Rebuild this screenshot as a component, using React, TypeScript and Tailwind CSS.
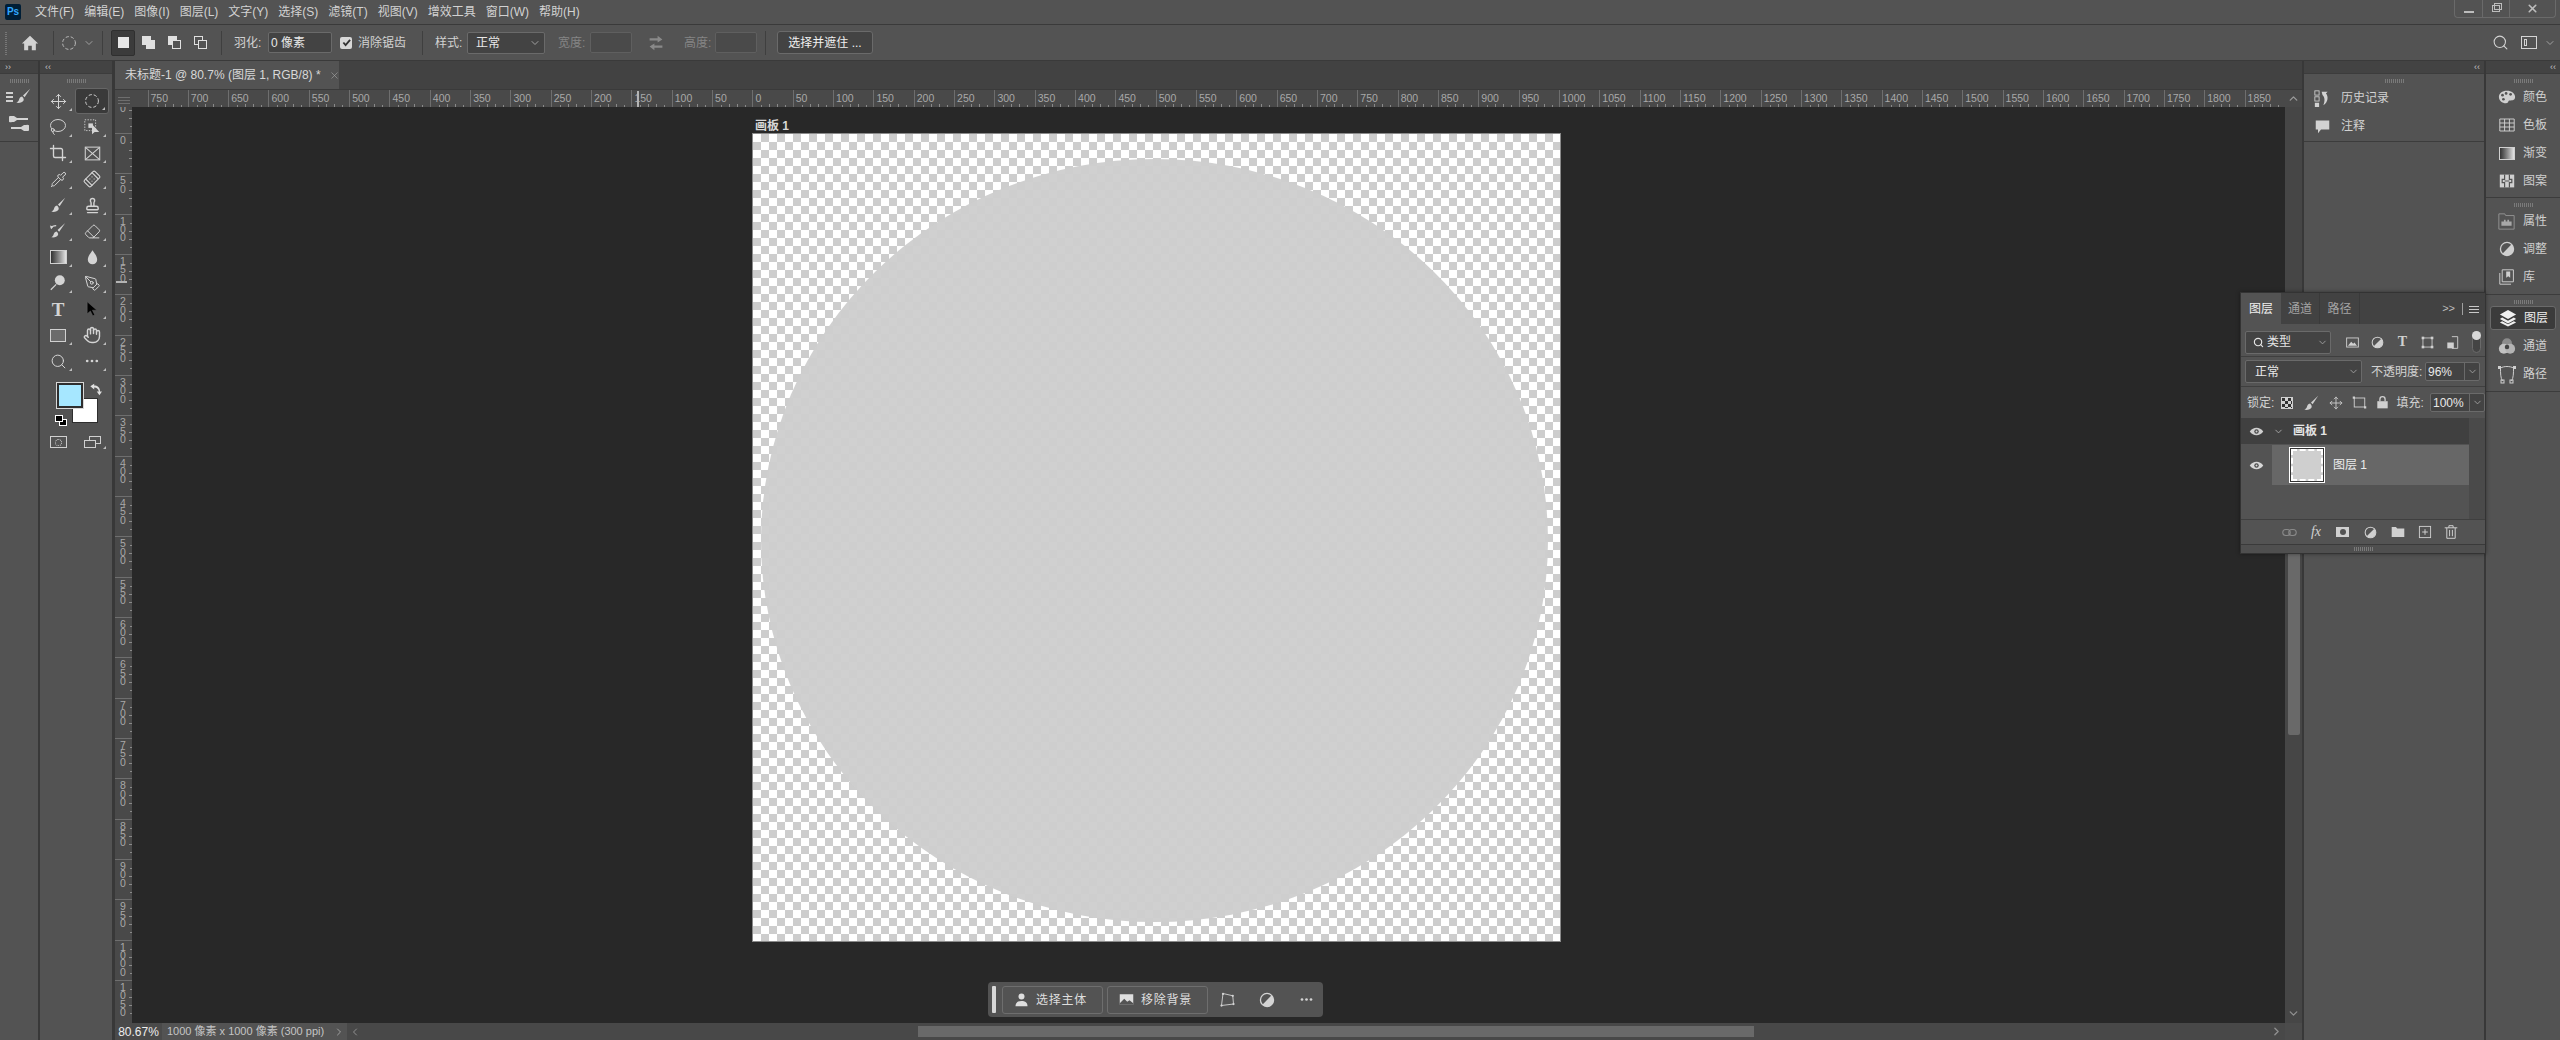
import React from 'react';
import { Bandage, ChevronDown, ChevronLeft, ChevronRight, ChevronUp, Crop, Eraser, Hand, Lasso, Move, PenTool, Pipette, Search, Stamp, X } from 'lucide-react';

const menus = ['文件(F)', '编辑(E)', '图像(I)', '图层(L)', '文字(Y)', '选择(S)', '滤镜(T)', '视图(V)', '增效工具', '窗口(W)', '帮助(H)'];

const Svg = ({ s = 20, h, vb = '0 0 20 20', children }: { s?: number; h?: number; vb?: string; children: React.ReactNode }) => (
  <svg width={s} height={h ?? s} viewBox={vb} fill="currentColor" className="shrink-0">{children}</svg>
);

const Half = ({ s = 16 }: { s?: number }) => (
  <Svg s={s}>
    <circle cx="10" cy="10" r="8.2" fill="none" stroke="currentColor" strokeWidth="1.6" />
    <path d="M15.8 4.2A8.2 8.2 0 0 1 4.2 15.8Z" />
  </Svg>
);

const BrushIcon = () => (
  <Svg s={18}>
    <path d="M18 2 10 9.5l1.8 1.8Z" />
    <path d="M9 10.5c-2.5.3-3 2-3.4 3.5-.3 1.400-1.200 2.500-3 3.500 3.500.5 7-.2 8-2.500.5-1.200.2-2.300-1.600-4.500Z" />
  </Svg>
);

const Marquee = ({ s = 16 }: { s?: number }) => (
  <Svg s={s}><circle cx="10" cy="10" r="8" fill="none" stroke="currentColor" strokeWidth="1.2" strokeDasharray="4 2.500" /></Svg>
);

const Gradient = ({ s = 16 }: { s?: number }) => (
  <span className="block shrink-0 border border-[#d0d0d0] bg-gradient-to-r from-[#333] to-[#e4e4e4]" style={{ width: s, height: s - 3 }} />
);

const SwapArrows = () => (
  <Svg s={16}>
    <path d="M2 6h10V3l6 4.500-6 4V9H2Z" opacity=".9" transform="translate(0 -2)" />
    <path d="M18 14H8v3l-6-4.500 6-4V11h10Z" opacity=".9" transform="translate(0 2)" />
  </Svg>
);

const tools: React.ReactNode[] = [
  <Move size={17} strokeWidth={1.4} />,
  <Marquee />,
  <Lasso size={18} strokeWidth={1.3} />,
  <Svg s={18}>
    <rect x="2" y="2" width="12" height="12" fill="none" stroke="currentColor" strokeDasharray="1.500 1.500" />
    <rect x="6" y="6" width="5" height="5" />
    <path d="M10 7v11l3-2.500h5Z" />
  </Svg>,
  <Crop size={18} strokeWidth={1.8} />,
  <Svg s={17}><rect x="1.500" y="2.500" width="17" height="15" fill="none" stroke="currentColor" strokeWidth="1.200" /><path d="m2 3 16 14M18 3 2 17" stroke="currentColor" strokeWidth="1.200" /></Svg>,
  <Pipette size={17} strokeWidth={1.4} />,
  <Bandage size={18} strokeWidth={1.5} className="-rotate-45" />,
  <BrushIcon />,
  <Stamp size={17} strokeWidth={2} />,
  <Svg s={18}>
    <path d="M18 1 9.500 9l1.800 1.800Z" /><path d="M8.500 10.500c-2.500.5-3 2-3.400 3.500-.3 1.400-1.100 2.300-2.600 3 3.500.5 6.500-.3 7.500-2.500.5-1.200.2-2.300-1.500-4Z" />
    <path d="M2 7c1-2 3-3 6-3" fill="none" stroke="currentColor" strokeWidth="1.200" /><path d="m1 4 1.500 4L5 5Z" />
  </Svg>,
  <Eraser size={17} strokeWidth={1.4} />,
  <Gradient s={17} />,
  <Svg s={17}><path d="M10 1.500c2.500 4 5.500 7 5.500 11a5.500 5.500 0 0 1-11 0c0-4 3-7 5.500-11Z" /></Svg>,
  <Svg s={18}><circle cx="12" cy="7" r="5.500" /><path d="M8 11.500 2 17.500" stroke="currentColor" strokeWidth="1.400" /></Svg>,
  <PenTool size={17} strokeWidth={1.4} />,
  <span className="font-['Liberation_Serif'] text-[19px] font-bold leading-none">T</span>,
  <Svg s={16}><path d="M4 1v15l4-3.500 3 6 2.500-1-3-6H16Z" fill="#000" stroke="#666" strokeWidth=".6" /></Svg>,
  <span className="block h-[13px] w-[16px] border border-[#d0d0d0] bg-[#6c6c6c]" />,
  <Hand size={18} strokeWidth={1.9} />,
  <Search size={17} strokeWidth={1.4} />,
  <Svg s={16}><circle cx="4" cy="10" r="1.700" /><circle cx="10" cy="10" r="1.700" /><circle cx="16" cy="10" r="1.700" /></Svg>,
];

const Grip = () => (
  <div className="mx-auto h-[4px] w-[19px] bg-[repeating-linear-gradient(90deg,#7a7a7a_0_1px,transparent_1px_2px)]" />
);

const Corner = () => <span className="absolute bottom-[3px] right-[3px] h-0 w-0 border-b-[3px] border-l-[3px] border-b-[#bdbdbd] border-l-transparent" />;

const Strip = ({ arrows, right }: { arrows: string; right?: boolean }) => (
  <div className={`flex h-[12px] shrink-0 items-center bg-[#434343] text-[9px] leading-none text-[#c4c4c4] ${right ? 'justify-end pr-[4px]' : 'pl-[5px]'}`}>{arrows}</div>
);

const spansX = Array.from({ length: 53 }, (_, i) => Math.abs(750 - i * 50));

const TickX = () => (
  <svg width="40" height="3" className="absolute bottom-0 left-0" fill="#8a8a8a">
    {[8, 16, 24, 32].map(x => <rect key={x} x={x} y={x === 16 || x === 24 ? 0 : 1} width="1" height="3" />)}
  </svg>
);

const RulerX = () => (
  <div className="flex h-[17px] min-w-0 flex-1 overflow-hidden bg-[#494949] text-[10.5px] leading-[17px] text-[#a8a8a8]">
    <div className="relative h-full w-[15.5px] shrink-0" />
    {spansX.map((n, i) => (
      <div key={i} className="relative h-full w-[40.33px] shrink-0 border-l border-[#6e6e6e] pl-[2px]">
        {n}
        <TickX />
      </div>
    ))}
    <span />
  </div>
);

const RulerY = () => (
  <div className="h-full w-[17px] shrink-0 overflow-hidden bg-[#494949] text-[10.5px] leading-[8.4px] text-[#a8a8a8]">
    <div className="-mt-[14.33px]">
      {[50, 0, 50, 100, 150, 200, 250, 300, 350, 400, 450, 500, 550, 600, 650, 700, 750, 800, 850, 900, 950, 1000, 1050].map((n, i) => (
        <div key={i} className="relative h-[40.33px] border-t border-[#6e6e6e] pl-[5px] pt-[2px]">
          {String(n).split('').map((d, j) => <div key={j}>{d}</div>)}
          <svg width="3" height="40" className="absolute right-0 top-0" fill="#8a8a8a">
            {[8, 16, 24, 32].map(y => <rect key={y} x={y === 16 || y === 24 ? 0 : 1} y={y} width="3" height="1" />)}
          </svg>
        </div>
      ))}
    </div>
  </div>
);

const Field = ({ w, children, cls = '' }: { w: string; children?: React.ReactNode; cls?: string }) => (
  <div className={`flex shrink-0 items-center rounded-[2px] border border-[#6a6a6a] bg-[#434343] ${w} ${cls}`}>{children}</div>
);

const DockItem = ({ icon, label, active }: { icon: React.ReactNode; label: string; active?: boolean }) => (
  <div className={`mx-auto flex h-[28px] items-center ${active ? 'w-[66px] rounded-[3px] border border-[#6a6a6a] bg-[#3b3b3b] text-[#f0f0f0] !h-[24px] my-[2px]' : 'w-[66px] text-[#cfcfcf]'}`}>
    <span className="flex w-[33px] shrink-0 justify-center">{icon}</span>
    <span className="text-[12px] leading-none">{label}</span>
  </div>
);

const Eye = () => (
  <Svg s={15}>
    <path d="M1 10c2.500-3.500 5.500-5 9-5s6.500 1.500 9 5c-2.500 3.500-5.500 5-9 5s-6.500-1.500-9-5Z" />
    <circle cx="10" cy="10" r="3" fill="#4a4a4a" /><circle cx="10" cy="10" r="1.300" />
  </Svg>
);

const App = () => {
  return (
    <div className="relative flex h-[1040px] w-[2560px] flex-col overflow-hidden bg-[#383838] font-['Liberation_Sans','Noto_Sans_CJK_SC',sans-serif] text-[12px] text-[#d2d2d2]">
      {/* menu */}
      <div className="flex h-[24px] shrink-0 items-center bg-[#535353] pl-[5px]">
        <div className="flex h-[16px] w-[16px] items-center justify-center rounded-[2px] bg-[#001e36] text-[10px] font-bold leading-none text-[#31a8ff]">Ps</div>
        <div className="ml-[14px] flex gap-[10px]">
          {menus.map(m => <span key={m} className="leading-none">{m}</span>)}
        </div>
        <div className="ml-auto mr-[4px] flex h-[18px] self-start rounded-b-[4px] border border-t-0 border-[#6a6a6a] text-[#bdbdbd]">
          <div className="flex w-[27px] items-end justify-center pb-[4px]"><span className="block h-[2px] w-[10px] bg-[#bdbdbd]" /></div>
          <div className="flex w-[27px] items-center justify-center border-l border-[#6a6a6a]">
            <span className="relative block h-[7px] w-[8px] border border-[#bdbdbd]"><span className="absolute -right-[3px] -top-[3px] h-[7px] w-[8px] border border-[#bdbdbd]" /></span>
          </div>
          <div className="flex w-[46px] items-center justify-center border-l border-[#6a6a6a]"><X size={13} strokeWidth={3} /></div>
        </div>
      </div>
      {/* options */}
      <div className="flex h-[37px] shrink-0 items-center border-y border-[#3a3a3a] bg-[#535353]">
        <div className="ml-[5px] h-[24px] w-[2px] bg-[repeating-linear-gradient(0deg,#777_0_1px,transparent_1px_2px)]" />
        <div className="flex w-[46px] justify-center">
          <Svg s={18}><path d="M10 2 1 10.500h2.500V18H8v-5h4v5h4.500v-7.500H19Z" /></Svg>
        </div>
        <div className="h-[24px] w-px bg-[#3f3f3f]" />
        <div className="ml-[7px] flex w-[41px] items-center text-[#bdbdbd]"><Marquee /><ChevronDown size={12} className="ml-[6px] text-[#a0a0a0]" /></div>
        <div className="h-[24px] w-px bg-[#3f3f3f]" />
        <div className="ml-[8px] flex h-[26px] w-[24px] items-center justify-center rounded-[2px] border border-[#2f2f2f] bg-[#3b3b3b]"><span className="block h-[11px] w-[11px] bg-[#e6e6e6]" /></div>
        <div className="flex w-[26px] justify-center"><span className="relative block h-[13px] w-[13px]"><span className="absolute left-0 top-0 h-[9px] w-[9px] bg-[#e0e0e0]" /><span className="absolute bottom-0 right-0 h-[9px] w-[9px] bg-[#e0e0e0]" /></span></div>
        <div className="flex w-[26px] justify-center"><span className="relative block h-[13px] w-[13px]"><span className="absolute left-0 top-0 h-[9px] w-[9px] bg-[#e0e0e0]" /><span className="absolute bottom-0 right-0 h-[9px] w-[9px] border border-[#e0e0e0] bg-[#535353]" /></span></div>
        <div className="flex w-[26px] justify-center"><span className="relative block h-[13px] w-[13px]"><span className="absolute left-0 top-0 h-[9px] w-[9px] border border-[#e0e0e0]" /><span className="absolute bottom-0 right-0 h-[9px] w-[9px] border border-[#e0e0e0] bg-[#535353]" /></span></div>
        <div className="ml-[8px] h-[24px] w-px bg-[#3f3f3f]" />
        <span className="ml-[12px] w-[34px]">羽化:</span>
        <Field w="w-[64px]" cls="h-[21px] pl-[2px] text-[#e8e8e8]">0 像素</Field>
        <span className="ml-[8px] flex h-[12px] w-[12px] items-center justify-center rounded-[2px] bg-[#d8d8d8] text-[#333]">
          <svg width="9" height="9" viewBox="0 0 10 10" fill="none" stroke="currentColor" strokeWidth="2"><path d="m1.500 5 2.500 3 5-6" /></svg>
        </span>
        <span className="ml-[6px] w-[64px]">消除锯齿</span>
        <div className="h-[24px] w-px bg-[#3f3f3f]" />
        <span className="ml-[12px] w-[32px]">样式:</span>
        <Field w="w-[78px]" cls="h-[22px] pl-[8px] text-[#e8e8e8]">正常<ChevronDown size={12} className="ml-auto mr-[3px] text-[#a0a0a0]" /></Field>
        <span className="ml-[13px] w-[32px] text-[#858585]">宽度:</span>
        <Field w="w-[42px]" cls="h-[21px] !border-[#5f5f5f] !bg-[#4a4a4a] p-[2px]" />
        <span className="ml-[16px] w-[36px] text-[#8f8f8f]"><SwapArrows /></span>
        <span className="w-[31px] text-[#858585]">高度:</span>
        <Field w="w-[42px]" cls="h-[21px] !border-[#5f5f5f] !bg-[#4a4a4a] p-[2px]" />
        <div className="ml-[8px] h-[24px] w-px bg-[#3f3f3f]" />
        <div className="ml-[11px] flex h-[23px] w-[96px] items-center justify-center rounded-[3px] border border-[#6a6a6a] bg-[#434343] text-[#f0f0f0]">选择并遮住 ...</div>
        <div className="ml-auto mr-[4px] flex items-center text-[#d4d4d4]">
          <Search size={17} strokeWidth={1.500} />
          <span className="ml-[12px] flex h-[13px] w-[16px] items-center border border-[#d4d4d4] pl-[2px]"><span className="block h-[7px] w-[3px] border border-[#d4d4d4]" /></span>
          <ChevronDown size={12} className="ml-[7px] text-[#a0a0a0]" />
        </div>
      </div>
      {/* body */}
      <div className="flex min-h-0 flex-1 gap-[2px]">
        <div className="flex w-[38px] shrink-0 flex-col bg-[#535353]">
          <Strip arrows="››" />
          <div className="flex h-[69px] flex-col items-center border-b border-t border-[#3c3c3c] pt-[5px]">
            <Grip />
            <div className="mt-[1px] flex h-[24px] items-center"><span className="mr-[1px] block h-[12px] w-[7px] bg-[repeating-linear-gradient(0deg,#d0d0d0_0_2px,transparent_2px_4px)]" /><BrushIcon /></div>
            <svg width="20" height="20" viewBox="0 0 20 20" fill="#d4d4d4" className="mt-[5px]">
              <path d="M1 3h4l3 2h11v2H8L5 9H3a3 3 0 0 1-2-6Z" />
              <path d="M19 18h-4l-3-2H2v-2h10l3-2h2a3 3 0 0 1 2 6Z" />
            </svg>
          </div>
        </div>
        <div className="mr-px flex w-[72px] shrink-0 flex-col bg-[#535353]">
          <Strip arrows="‹‹" />
          <div className="border-t border-[#3c3c3c] pt-[5px]"><Grip /></div>
          <div className="mt-[5px] grid grid-cols-2 pl-px pr-[3px]">
            {tools.map((t, i) => (
              <div key={i} className={`relative flex h-[26px] items-center justify-center rounded-[3px] text-[#d4d4d4] ${i === 1 ? 'border border-[#666] bg-[#3a3a3a]' : ''}`}>
                {t}
                {i !== 16 && <Corner />}
              </div>
            ))}
          </div>
          <div className="relative mt-[8px] h-[50px]">
            <span className="absolute left-[17px] top-[1px] z-10 h-[25px] w-[26px] border-2 border-[#2e2e2e] bg-[#a6e7ff] outline outline-1 outline-[#d8d8d8]" />
            <span className="absolute left-[32px] top-[16px] h-[25px] w-[26px] border border-[#2e2e2e] bg-white" />
            <span className="absolute left-[15px] top-[33px] z-10 h-[7px] w-[8px] border border-white bg-black" />
            <span className="absolute left-[19px] top-[37px] h-[7px] w-[8px] border border-white bg-black" />
            <svg width="13" height="13" viewBox="0 0 20 20" fill="#e0e0e0" className="absolute left-[49px] top-[1px]">
              <path d="M2 5 8 1v3c5 0 9 3 9 9h3l-4 6-4-6h3c0-3-3-6-7-6v3Z" />
            </svg>
          </div>
          <div className="grid grid-cols-2 pl-px pr-[3px]">
            <div className="flex h-[20px] items-center justify-center">
              <span className="flex h-[12px] w-[17px] items-center justify-center border border-[#d0d0d0]"><span className="block h-[7px] w-[7px] rounded-full border border-dotted border-[#d0d0d0]" /></span>
            </div>
            <div className="relative flex h-[20px] items-center justify-center">
              <span className="relative block h-[12px] w-[17px]"><span className="absolute right-0 top-0 h-[8px] w-[12px] border border-[#d0d0d0]" /><span className="absolute bottom-0 left-0 h-[8px] w-[12px] border border-[#d0d0d0] bg-[#535353]" /></span>
              <Corner />
            </div>
          </div>
        </div>
        {/* document */}
        <div className="flex min-w-0 flex-1 flex-col">
          <div className="flex h-[29px] shrink-0 border-b border-[#3a3a3a] bg-[#424242]">
            <div className="flex w-[224px] items-center whitespace-nowrap bg-[#535353] pl-[10px] text-[#d8d8d8]">
              未标题-1 @ 80.7% (图层 1, RGB/8) *
              <X size={11} strokeWidth={1.300} className="ml-[8px] shrink-0 text-[#a8a8a8]" />
            </div>
          </div>
          <div className="flex h-[17px] shrink-0">
            <div className="flex w-[17px] shrink-0 items-end justify-center bg-[#494949] pb-[3px]">
              <span className="relative block h-[8px] w-[12px] bg-[repeating-linear-gradient(0deg,#6e6e6e_0_1px,transparent_1px_3px)]" />
            </div>
            <RulerX />
            <div className="flex w-[17px] shrink-0 items-center justify-center bg-[#494949] text-[#9a9a9a]"><ChevronUp size={13} strokeWidth={2.500} /></div>
          </div>
          <div className="flex min-h-0 flex-1">
            <RulerY />
            <div className="relative min-w-0 flex-1 overflow-hidden bg-[#282828] pl-[621px] pt-[13px]">
              <div className="ml-[2px] h-[13px] font-bold leading-[13px] text-[#d8d8d8]">画板 1</div>
              <div className="-ml-px box-content h-[807px] w-[807px] border border-[#8a8a8a] bg-[repeating-conic-gradient(#cdcdcd_0_25%,#fff_0_50%)] bg-[length:16px_16px]">
                <div className="ml-[8px] mt-[25px] inline-block h-[763px] w-[787px] rounded-[50%] bg-[#cecece]/96 align-top" />
              </div>
            </div>
            <div className="flex w-[17px] shrink-0 flex-col bg-[#464646]">
              <div className="mx-auto mt-[293px] h-[335px] w-[12px] rounded-b-[2px] bg-[#696969]" />
              <div className="mt-auto flex h-[20px] items-center justify-center text-[#8f8f8f]"><ChevronDown size={13} strokeWidth={2.500} /></div>
            </div>
          </div>
          <div className="flex h-[17px] shrink-0 items-center">
            <div className="flex h-full w-[47px] shrink-0 items-center justify-center bg-[#4a4a4a] text-[#ededed]">80.67%</div>
            <div className="flex h-full w-[185px] shrink-0 items-center bg-[#535353] pl-[5px] text-[11px] text-[#c4c4c4]">1000 像素 x 1000 像素 (300 ppi)<ChevronRight size={12} className="ml-auto mr-[2px] text-[#a0a0a0]" /></div>
            <div className="flex h-full flex-1 items-center bg-[#484848] text-[#8f8f8f]">
              <ChevronLeft size={12} strokeWidth={2} className="ml-[2px]" />
              <div className="ml-[557px] h-[11px] w-[836px] bg-[#696969]" />
              <ChevronRight size={13} strokeWidth={2.500} className="ml-auto mr-[2px]" />
            </div>
            <div className="h-full w-[17px] shrink-0 bg-[#4b4b4b]" />
          </div>
        </div>
        {/* right panel strip */}
        <div className="flex w-[180px] shrink-0 flex-col bg-[#535353]">
          <Strip arrows="‹‹" right />
          <div className="flex h-[69px] shrink-0 flex-col border-b border-t border-[#3c3c3c] pt-[5px] text-[12px]">
            <Grip />
            <div className="mt-[1px] flex h-[28px] items-center">
              <span className="flex w-[37px] justify-center">
                <Svg s={17}><rect x="1" y="1" width="5" height="5" fill="none" stroke="currentColor" /><rect x="1" y="8" width="5" height="5" fill="none" stroke="currentColor" /><rect x="1" y="15" width="5" height="5" /><path d="M9 2h7l-2 2c3 3 3 10-3 14 2-5 2-9-1-12Z" /></Svg>
              </span>
              历史记录
            </div>
            <div className="flex h-[28px] items-center">
              <span className="flex w-[37px] justify-center"><Svg s={15}><path d="M1 2h18v12H8l-4 5v-5H1Z" /></Svg></span>
              注释
            </div>
          </div>
        </div>
        <div className="flex w-[74px] shrink-0 flex-col bg-[#535353]">
          <Strip arrows="‹‹" right />
          <div className="h-[125px] shrink-0 border-y border-[#3c3c3c] pt-[5px]">
            <Grip />
            <DockItem label="颜色" icon={<Svg s={18}><path d="M10 3C4.500 3 1 6 1 10s3.500 7 8 7c3 0 2-2.500 3.500-3 2-.5 6.500.5 6.500-4 0-4-4-7-9-7Z" /><circle cx="5" cy="8" r="1.500" fill="#535353" /><circle cx="9" cy="6" r="1.500" fill="#535353" /><circle cx="14" cy="7" r="1.500" fill="#535353" /><circle cx="6" cy="12.500" r="1.500" fill="#535353" /></Svg>} />
            <DockItem label="色板" icon={<Svg s={16}><path d="M1 2.500h18v15H1ZM7 2.500v15M13 2.500v15M1 7.500h18M1 12.500h18" fill="none" stroke="currentColor" strokeWidth="1.200" /></Svg>} />
            <DockItem label="渐变" icon={<Gradient s={16} />} />
            <DockItem label="图案" icon={<Svg s={16}><rect x="1" y="2" width="18" height="16" /><path d="M7 2v6H4v4h3v6M13 2v6h3v4h-3v6M7 10h6" fill="none" stroke="#535353" strokeWidth="1.500" /></Svg>} />
          </div>
          <div className="h-[97px] shrink-0 border-b border-[#3c3c3c] pt-[5px]">
            <Grip />
            <DockItem label="属性" icon={<Svg s={17}><path d="M1 1h7l1 2h10v16H1Z" fill="none" stroke="#999" strokeWidth="1" /><path d="M4 15v-5h3V8h2v2h2V8h2v2h3v5Z" fill="#a8a8a8" /></Svg>} />
            <DockItem label="调整" icon={<Half />} />
            <DockItem label="库" icon={<Svg s={16}><path d="M1 5v14h14M4 1h14v15H4Z" fill="none" stroke="currentColor" strokeWidth="1.200" /><path d="M9 3h5v8l-2.500-2L9 11Z" /></Svg>} />
          </div>
          <div className="h-[97px] shrink-0 border-b border-[#3c3c3c] pt-[5px]">
            <Grip />
            <DockItem active label="图层" icon={<Svg s={18}><path d="m10 1 9 5-9 5-9-5Z" /><path d="m3.500 9.500 6.500 3.500 6.500-3.500L19 11l-9 5-9-5ZM3.500 13.500l6.500 3.500 6.500-3.500L19 15l-9 4.500L1 15Z" /></Svg>} />
            <DockItem label="通道" icon={<Svg s={18}><circle cx="10" cy="7" r="5.500" fill="#8c8c8c" /><circle cx="6.500" cy="13" r="5.500" fill="#c2c2c2" /><circle cx="13.500" cy="13" r="5.500" fill="#b4b4b4" /><circle cx="10" cy="11" r="2.500" fill="#444" /></Svg>} />
            <DockItem label="路径" icon={<Svg s={20}><path d="M3.500 4c0 5 0 10 2 13M16.500 4c0 5 0 10-2 13M3.500 4C7 2 13 2 16.500 4" fill="none" stroke="currentColor" strokeWidth="1" /><rect x="1" y="2" width="3" height="3" /><rect x="16" y="2" width="3" height="3" /><rect x="4" y="16" width="3" height="3" fill="none" stroke="currentColor" /><rect x="13" y="16" width="3" height="3" fill="none" stroke="currentColor" /></Svg>} />
          </div>
        </div>
      </div>

      {/* ruler cursor marks */}
      <span className="absolute left-[637px] top-[91px] h-[16px] w-[2px] bg-[#b4b4b4]" />
      <span className="absolute left-[116px] top-[281px] h-[2px] w-[11px] bg-[#b4b4b4]" />

      {/* floating selection bar */}
      <div className="absolute left-[988px] top-[982px] flex h-[35px] w-[335px] items-center rounded-[4px] bg-[#535353] pl-[4px] text-[12px] tracking-[0.75px] text-[#dedede]">
        <span className="block h-[27px] w-[4px] rounded-[1px] bg-[#d8d8d8]" />
        <div className="ml-[6px] flex h-[28px] w-[101px] items-center rounded-[3px] border border-[#6e6e6e] pl-[11px]">
          <Svg s={15}><circle cx="10" cy="6" r="4" /><path d="M2 19c0-5 3-7 8-7s8 2 8 7Z" /></Svg>
          <span className="ml-[7px]">选择主体</span>
        </div>
        <div className="ml-[4px] flex h-[28px] w-[101px] items-center rounded-[3px] border border-[#6e6e6e] pl-[11px]">
          <Svg s={15}><rect x="1" y="3" width="18" height="14" /><path d="m1 15 6-6 4 4 3-2 5 4v2H1Z" fill="#535353" /></Svg>
          <span className="ml-[7px]">移除背景</span>
        </div>
        <div className="flex items-center gap-[24px] pl-[12px] text-[#d4d4d4]">
          <Svg s={15}><path d="M4 2 17 5l1 11-16 2Z" fill="none" stroke="currentColor" strokeWidth="1.200" /><circle cx="4" cy="2.500" r="1.500" /><circle cx="17" cy="5" r="1.500" /><circle cx="18" cy="16" r="1.500" /><circle cx="2" cy="18" r="1.500" /></Svg>
          <Half />
          <Svg s={15}><circle cx="4" cy="10" r="1.800" /><circle cx="10" cy="10" r="1.800" /><circle cx="16" cy="10" r="1.800" /></Svg>
        </div>
      </div>

      {/* floating layers panel */}
      <div className="absolute left-[2240px] top-[292px] flex h-[262px] w-[246px] flex-col border border-[#333] bg-[#535353] shadow-[0_0_4px_#0006]">
        <div className="flex h-[31px] shrink-0 items-center bg-[#424242] text-[12px]">
          <div className="flex h-full w-[40px] items-center justify-center bg-[#535353] text-[#f0f0f0]">图层</div>
          <div className="flex h-full w-[39px] items-center justify-center border-r border-[#3a3a3a] text-[#a4a4a4]">通道</div>
          <div className="flex h-full w-[40px] items-center justify-center border-r border-[#3a3a3a] text-[#a4a4a4]">路径</div>
          <span className="ml-auto text-[11px] text-[#bdbdbd]">{'>>'}</span>
          <span className="ml-[7px] h-[12px] w-px bg-[#a0a0a0]" />
          <span className="mx-[6px] block h-[8px] w-[10px] bg-[repeating-linear-gradient(0deg,#c8c8c8_0_1px,transparent_1px_3px)]" />
        </div>
        <div className="flex h-[33px] shrink-0 items-center border-b border-[#3f3f3f] pl-[4px] pt-[4px]">
          <Field w="w-[86px]" cls="h-[23px] pl-[7px] text-[#e4e4e4]"><Search size={11} strokeWidth={2.500} /><span className="ml-[3px]">类型</span><ChevronDown size={11} className="ml-auto mr-[2px] text-[#a0a0a0]" /></Field>
          <div className="ml-[15px] flex items-center gap-[12px] text-[#d0d0d0]">
            <Svg s={13}><rect x="1" y="3" width="18" height="14" fill="none" stroke="currentColor" strokeWidth="1.400" /><path d="m3 15 5-6 3 3 2-2 4 5Z" /></Svg>
            <Half s={13} />
            <span className="flex w-[13px] justify-center font-['Liberation_Serif'] text-[14px] font-bold leading-none">T</span>
            <Svg s={13}><rect x="3" y="3" width="14" height="14" fill="none" stroke="currentColor" strokeWidth="1.300" /><rect x="1" y="1" width="4" height="4" /><rect x="15" y="1" width="4" height="4" /><rect x="1" y="15" width="4" height="4" /><rect x="15" y="15" width="4" height="4" /></Svg>
            <Svg s={13}><path d="M9 1h9v18H9" fill="none" stroke="currentColor" strokeWidth="1.400" /><rect x="2" y="10" width="10" height="9" /></Svg>
          </div>
          <span className="relative ml-[13px] block h-[22px] w-[9px] rounded-full border border-[#6a6a6a] bg-[#444]"><span className="absolute -left-px -top-px h-[9px] w-[9px] rounded-full bg-[#d8d8d8]" /></span>
        </div>
        <div className="flex h-[30px] shrink-0 items-center border-b border-[#3f3f3f] pl-[4px]">
          <Field w="w-[117px]" cls="h-[23px] pl-[9px] text-[#e8e8e8]">正常<ChevronDown size={11} className="ml-auto mr-[2px] text-[#a0a0a0]" /></Field>
          <span className="ml-[9px] w-[54px] whitespace-nowrap">不透明度:</span>
          <Field w="w-[55px]" cls="h-[19px] pl-[2px] text-[#e8e8e8]">96%<span className="ml-auto flex h-full w-[15px] items-center justify-center border-l border-[#6a6a6a]"><ChevronDown size={11} className="text-[#a0a0a0]" /></span></Field>
        </div>
        <div className="flex h-[31px] shrink-0 items-center pl-[6px]">
          <span className="w-[34px] whitespace-nowrap">锁定:</span>
          <div className="ml-[2px] flex items-center gap-[9px] text-[#d0d0d0]">
            <span className="block h-[12px] w-[12px] border border-[#d0d0d0] bg-[repeating-conic-gradient(#d0d0d0_0_25%,#333_0_50%)] bg-[length:6px_6px]" />
            <BrushIcon />
            <Move size={14} strokeWidth={1.500} />
            <Svg s={15}><rect x="3" y="4" width="14" height="12" fill="none" stroke="currentColor" strokeWidth="1.200" /><rect x="1" y="2" width="3" height="3" /><rect x="16" y="15" width="3" height="3" /></Svg>
            <Svg s={13}><rect x="2" y="8" width="16" height="11" /><path d="M6 8V5a4 4 0 0 1 8 0v3" fill="none" stroke="currentColor" strokeWidth="2" /></Svg>
          </div>
          <span className="ml-[8px] w-[36px] whitespace-nowrap">填充:</span>
          <Field w="w-[55px]" cls="h-[19px] pl-[2px] text-[#e8e8e8]">100%<span className="ml-auto flex h-full w-[15px] items-center justify-center border-l border-[#6a6a6a]"><ChevronDown size={11} className="text-[#a0a0a0]" /></span></Field>
        </div>
        <div className="flex min-h-0 flex-1">
          <div className="flex w-[228px] flex-col">
            <div className="flex h-[26px] items-center bg-[#404040]">
              <span className="flex w-[30px] justify-center text-[#d0d0d0]"><Eye /></span>
              <ChevronDown size={11} className="ml-[2px] text-[#a8a8a8]" />
              <span className="ml-[9px] font-bold text-[#e4e4e4]">画板 1</span>
            </div>
            <div className="mt-px flex h-[40px] items-center">
              <span className="flex h-full w-[30px] items-center justify-center text-[#d8d8d8]"><Eye /></span>
              <div className="ml-px flex h-full flex-1 items-center bg-[#676767] pl-[17px]">
                <div className="flex h-[36px] w-[36px] items-center justify-center border border-white bg-[#333] p-px">
                  <div className="flex h-full w-full items-center justify-center border-2 border-dashed border-white bg-[#cfcfcf]" />
                </div>
                <span className="ml-[8px] text-[#ececec]">图层 1</span>
              </div>
            </div>
          </div>
          <div className="flex-1 bg-[#4a4a4a]" />
        </div>
        <div className="flex h-[25px] shrink-0 items-center border-t border-[#3f3f3f] pl-[35px] text-[#d0d0d0]">
          <span className="flex w-[27px] justify-center text-[#8a8a8a]"><Svg s={15}><rect x="1" y="6" width="10" height="8" rx="4" fill="none" stroke="currentColor" strokeWidth="1.400" /><rect x="9" y="6" width="10" height="8" rx="4" fill="none" stroke="currentColor" strokeWidth="1.400" /></Svg></span>
          <span className="flex w-[26px] justify-center font-['Liberation_Serif'] text-[14px] italic leading-none">fx</span>
          <span className="flex w-[27px] justify-center"><span className="flex h-[10px] w-[13px] items-center justify-center bg-[#d0d0d0]"><span className="block h-[6px] w-[6px] rounded-full bg-[#535353]" /></span></span>
          <span className="flex w-[28px] justify-center"><Half s={13} /></span>
          <span className="flex w-[27px] justify-center"><Svg s={14}><path d="M1 3h6l2 2h10v12H1Z" /></Svg></span>
          <span className="flex w-[27px] justify-center"><Svg s={14}><rect x="2" y="2" width="16" height="16" fill="none" stroke="currentColor" strokeWidth="1.300" /><path d="M10 6v8M6 10h8" stroke="currentColor" strokeWidth="1.400" /></Svg></span>
          <span className="flex w-[26px] justify-center"><Svg s={14}><path d="M1 4h18M7 4V1h6v3M4 4v15h12V4M8 7v9M12 7v9" fill="none" stroke="currentColor" strokeWidth="1.400" /></Svg></span>
        </div>
        <div className="flex h-[9px] shrink-0 items-center border-t border-[#3a3a3a] bg-[#4f4f4f]"><Grip /></div>
      </div>
    </div>
  );
};

export default App;
